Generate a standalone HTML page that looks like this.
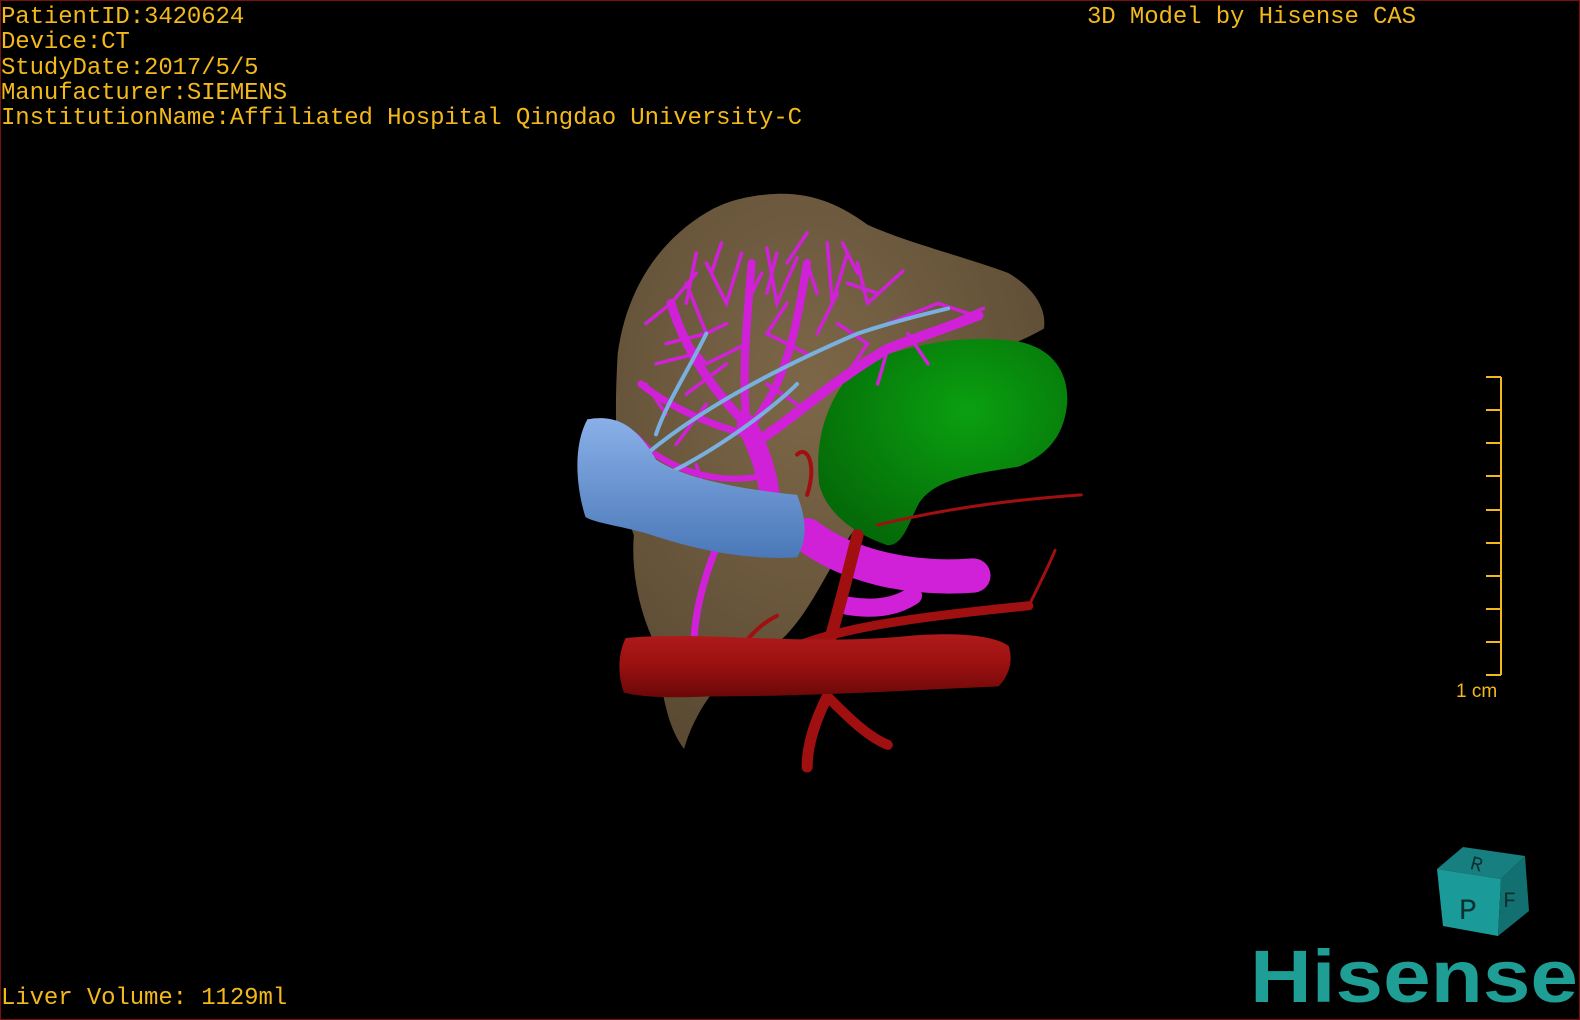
<!DOCTYPE html>
<html><head><meta charset="utf-8"><style>
html,body{margin:0;padding:0;background:#000;width:1580px;height:1020px;overflow:hidden}
#wrap{position:relative;width:1578px;height:1018px;border:1px solid #7a1010;background:#000}
.t{position:absolute;font-family:"Liberation Mono",monospace;font-size:24px;color:#f2b81c;white-space:pre;line-height:25.3px;letter-spacing:-0.1px}
svg{position:absolute;left:0;top:0}
</style></head><body><div id="wrap">
<svg width="1580" height="1020" viewBox="0 0 1568 1012" preserveAspectRatio="none">
<defs>
<radialGradient id="liv" cx="0.45" cy="0.35" r="0.7"><stop offset="0" stop-color="#7d6748"/><stop offset="1" stop-color="#5a4a33"/></radialGradient>
<radialGradient id="gb" cx="0.6" cy="0.35" r="0.7"><stop offset="0" stop-color="#0aa010"/><stop offset="1" stop-color="#056a08"/></radialGradient>
<linearGradient id="ivc" x1="0" y1="0" x2="0" y2="1"><stop offset="0" stop-color="#8ab0e8"/><stop offset="1" stop-color="#4a78b8"/></linearGradient>
<linearGradient id="ao" x1="0" y1="0" x2="0" y2="1"><stop offset="0" stop-color="#b01a1a"/><stop offset="0.5" stop-color="#9a1010"/><stop offset="1" stop-color="#6a0808"/></linearGradient>
</defs>
<path d="M760,192 C800,188 830,200 860,222 C900,240 960,255 1000,270 C1025,285 1038,305 1035,325 C1000,345 950,360 900,390 C870,430 860,480 850,520 C820,560 800,620 760,645 C720,660 690,700 678,742 C660,720 655,680 650,640 C635,610 625,570 628,530 C610,480 608,420 612,350 C620,290 650,240 700,210 C720,198 740,194 760,192 Z" fill="url(#liv)"/>
<path d="M850,362 C900,340 960,330 1010,338 C1045,345 1060,370 1058,400 C1055,430 1040,450 1010,462 C960,470 925,475 910,500 C900,520 895,540 880,540 C850,530 820,510 812,480 C808,440 815,400 850,362 Z" fill="url(#gb)"/>
<g stroke="#d020d8" fill="none" stroke-linecap="round">
<path d="M800,530 C840,560 900,575 965,570" stroke-width="34"/>
<path d="M840,600 C870,605 890,600 905,590" stroke-width="18"/>
<path d="M760,540 C770,500 760,460 740,420" stroke-width="20"/>
<path d="M745,440 C780,420 820,380 880,345 C920,330 950,320 970,312" stroke-width="10"/>
<path d="M740,420 C710,390 680,350 665,300" stroke-width="9"/>
<path d="M740,420 C735,370 740,320 745,260" stroke-width="8"/>
<path d="M745,420 C780,380 790,320 800,260" stroke-width="8"/>
<path d="M740,430 C700,420 660,400 635,380" stroke-width="7"/>
<path d="M760,470 C720,480 680,470 650,450" stroke-width="6"/>
<path d="M720,520 C700,560 690,600 688,630" stroke-width="7"/>
</g>
<g stroke="#d020d8" fill="none" stroke-width="3.5" stroke-linecap="round">
<path d="M700,260 L720,300 L735,250 M760,245 L770,300 L790,255 M820,240 L825,300 L840,250 M850,260 L860,300 L895,268 M880,320 L930,300 L960,310 M665,300 L640,320 M665,300 L690,270 M700,330 L660,340 M720,360 L680,390 M640,380 L660,410 M650,450 L630,430 M690,460 L700,490 M780,300 L760,330 L800,350 M830,320 L860,340 L840,370 M900,330 L920,360 M880,345 L870,380 M680,280 L700,330 L720,320 M755,270 L740,300 M800,260 L810,290 M715,240 L705,270 M675,330 L700,360 L740,340 M690,250 L680,300 M770,250 L760,290 M840,280 L870,290 M940,320 L975,305 M650,360 L690,350 M700,400 L670,440 M780,260 L800,230 M835,240 L850,270 M760,380 L790,400 M810,330 L830,290"/>
</g>
<g stroke="#7ab0e0" fill="none" stroke-width="4" stroke-linecap="round">
<path d="M640,450 C700,400 780,360 850,330 C880,320 910,312 940,305"/>
<path d="M660,470 C720,440 770,400 790,380"/>
<path d="M650,430 C660,400 680,370 700,330"/>
</g>
<path d="M582,415 C610,410 630,420 650,455 C680,475 740,485 790,490 C800,515 800,535 790,552 C740,555 690,545 640,528 C610,520 590,518 580,512 C570,480 568,440 582,415 Z" fill="url(#ivc)"/>
<g stroke="#a01010" fill="none" stroke-linecap="round">
<path d="M850,530 C840,570 830,610 815,660" stroke-width="12"/>
<path d="M820,690 C810,710 800,735 800,760" stroke-width="11"/>
<path d="M820,690 C840,710 860,730 880,738" stroke-width="10"/>
<path d="M790,640 C840,620 920,610 1020,600" stroke-width="9"/>
<path d="M870,520 C930,505 1000,495 1072,490" stroke-width="3"/>
<path d="M1020,600 C1030,580 1040,560 1046,545" stroke-width="3"/>
<path d="M770,610 C750,620 740,635 735,640" stroke-width="4"/>
<path d="M800,490 C810,460 800,440 790,450" stroke-width="4"/>
</g>
<path d="M620,632 C700,625 800,640 900,630 C960,625 990,632 1000,640 C1005,655 1000,670 990,680 C900,684 800,690 700,690 C660,692 630,690 618,686 C612,668 612,648 620,632 Z" fill="url(#ao)"/>
</svg>
<svg width="1580" height="1020">
<g stroke="#f2b81c" stroke-width="2" fill="none">
<path d="M1500,376 V674 M1485,376 H1500 M1485,409 H1500 M1485,442 H1500 M1485,475 H1500 M1485,509 H1500 M1485,542 H1500 M1485,575 H1500 M1485,608 H1500 M1485,641 H1500 M1485,674 H1500"/>
</g>
<text x="1455" y="696" font-family="Liberation Sans,sans-serif" font-size="19" fill="#f2b81c">1 cm</text>
<polygon points="1436,868 1462,846 1524,855 1500,878" fill="#177f7f"/>
<polygon points="1436,868 1500,878 1497,935 1442,925" fill="#1a9a98"/>
<polygon points="1500,878 1524,855 1528,910 1497,935" fill="#137070"/>
<text x="1470" y="870" font-family="Liberation Mono,monospace" font-size="20" fill="#0b3030" transform="rotate(15 1478 862)">R</text>
<text x="1458" y="918" font-family="Liberation Mono,monospace" font-size="30" fill="#0b3030">P</text>
<text x="1502" y="906" font-family="Liberation Mono,monospace" font-size="22" fill="#0b3030">F</text>
<text x="1249" y="1001" font-family="Liberation Sans,sans-serif" font-weight="bold" font-size="74" fill="#1e9e94" textLength="328" lengthAdjust="spacingAndGlyphs">Hisense</text>
</svg>
<div class="t" style="left:0;top:4px">PatientID:3420624
Device:CT
StudyDate:2017/5/5
Manufacturer:SIEMENS
InstitutionName:Affiliated Hospital Qingdao University-C</div>
<div class="t" style="left:1086px;top:4px">3D Model by Hisense CAS</div>
<div class="t" style="left:0;top:985px">Liver Volume: 1129ml</div>
</div></body></html>
